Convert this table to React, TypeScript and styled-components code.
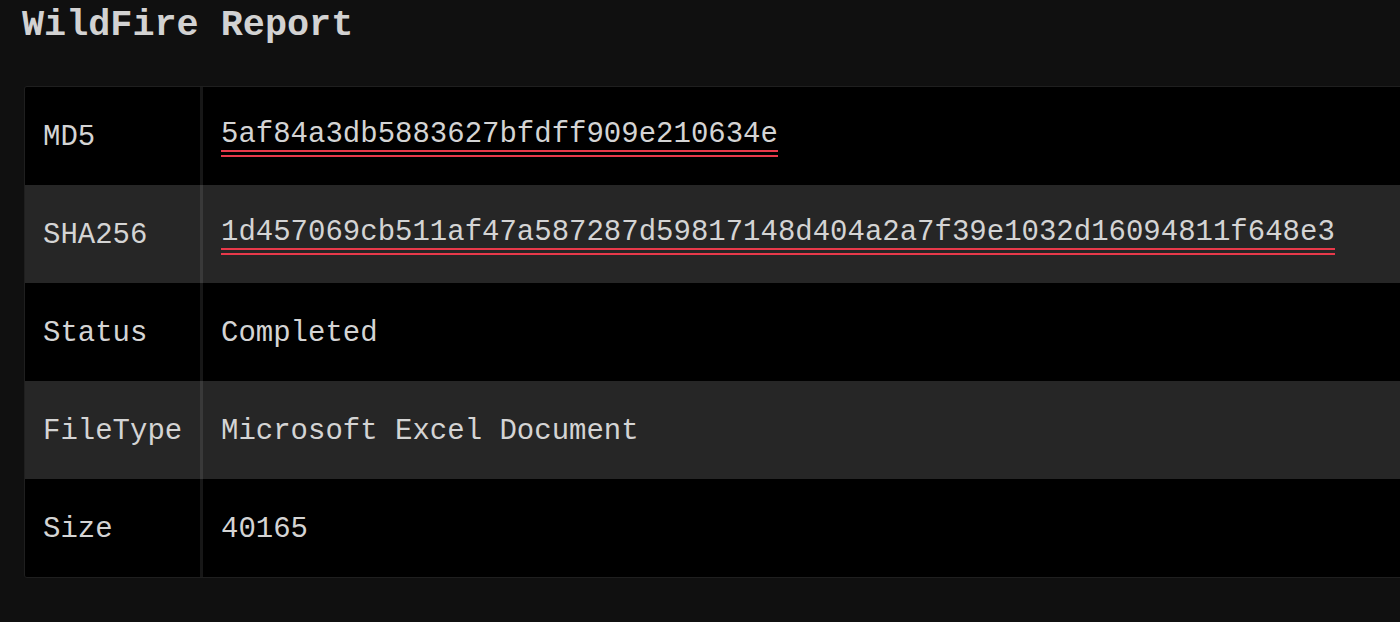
import React from "react";
import styled, { createGlobalStyle } from "styled-components";

const GlobalStyle = createGlobalStyle`
  html, body {
    margin: 0;
    padding: 0;
    background: #101010;
  }
  body {
    font-family: "Liberation Mono", "Courier New", monospace;
    overflow: hidden;
  }
`;

const Page = styled.div`
  width: 1400px;
  height: 622px;
  background: #101010;
  padding: 4px 0 0 22px;
  box-sizing: border-box;
  overflow: hidden;
`;

const Title = styled.h1`
  margin: 0;
  font-family: "Liberation Mono", "Courier New", monospace;
  font-size: 36.8px;
  font-weight: 700;
  line-height: normal;
  color: #d2d2d2;
`;

const Table = styled.div`
  margin: 40px 0 0 2px;
  width: 1420px;
  border: 1px solid #1f1f1f;
  border-radius: 3px;
  overflow: hidden;
`;

const Row = styled.div<{ $alt?: boolean }>`
  display: grid;
  grid-template-columns: 178px 1fr;
  height: 98px;
  background: ${(p) => (p.$alt ? "#262626" : "#000000")};
`;

const Cell = styled.div`
  display: flex;
  align-items: center;
  padding: 3px 0 0 18px;
  font-family: "Liberation Mono", "Courier New", monospace;
  font-size: 29px;
  color: #d4d4d4;
  white-space: nowrap;
`;

const KeyCell = styled(Cell)`
  border-right: 3px solid rgba(255, 255, 255, 0.09);
`;

const Hash = styled.span`
  padding-bottom: 6px;
  background:
    linear-gradient(#e8394a, #e8394a) 0 100% / 100% 2px no-repeat,
    linear-gradient(#e8394a, #e8394a) 0 calc(100% - 5px) / 100% 2px no-repeat;
`;

const rows: { key: string; value: string; hash?: boolean }[] = [
  { key: "MD5", value: "5af84a3db5883627bfdff909e210634e", hash: true },
  {
    key: "SHA256",
    value: "1d457069cb511af47a587287d59817148d404a2a7f39e1032d16094811f648e3",
    hash: true,
  },
  { key: "Status", value: "Completed" },
  { key: "FileType", value: "Microsoft Excel Document" },
  { key: "Size", value: "40165" },
];

export default function App() {
  return (
    <>
      <GlobalStyle />
      <Page>
        <Title>WildFire Report</Title>
        <Table>
          {rows.map((r, i) => (
            <Row key={r.key} $alt={i % 2 === 1}>
              <KeyCell>{r.key}</KeyCell>
              <Cell>{r.hash ? <Hash>{r.value}</Hash> : r.value}</Cell>
            </Row>
          ))}
        </Table>
      </Page>
    </>
  );
}
